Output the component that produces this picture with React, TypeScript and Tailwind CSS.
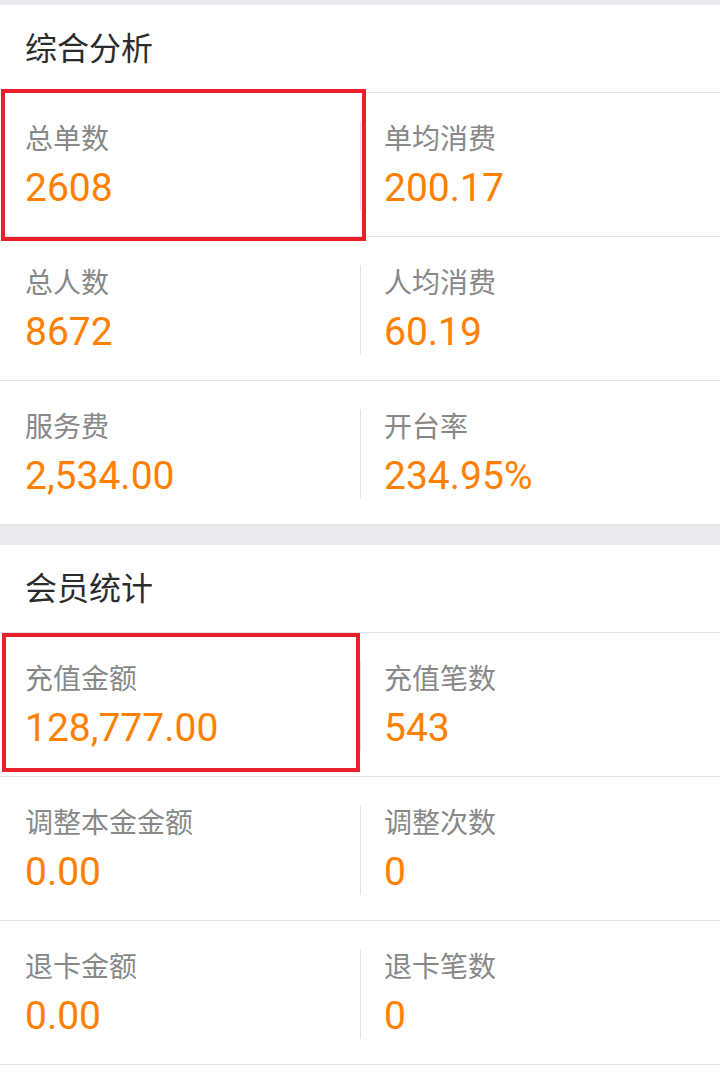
import React from "react";

type Item = { label: string; value: string };

const sections: { title: string; rows: [Item, Item][] }[] = [
  {
    title: "综合分析",
    rows: [
      [
        { label: "总单数", value: "2608" },
        { label: "单均消费", value: "200.17" },
      ],
      [
        { label: "总人数", value: "8672" },
        { label: "人均消费", value: "60.19" },
      ],
      [
        { label: "服务费", value: "2,534.00" },
        { label: "开台率", value: "234.95%" },
      ],
    ],
  },
  {
    title: "会员统计",
    rows: [
      [
        { label: "充值金额", value: "128,777.00" },
        { label: "充值笔数", value: "543" },
      ],
      [
        { label: "调整本金金额", value: "0.00" },
        { label: "调整次数", value: "0" },
      ],
      [
        { label: "退卡金额", value: "0.00" },
        { label: "退卡笔数", value: "0" },
      ],
    ],
  },
];

const cjk = "font-['Roboto','Noto_Sans_CJK_SC',sans-serif]";

function Cell({ item }: { item: Item }) {
  return (
    <div className="flex flex-col">
      <div className={`${cjk} text-[28px] leading-[36px] text-[#888888]`}>{item.label}</div>
      <div className={`${cjk} mt-[6px] text-[39px] leading-[48px] text-[#ff7f00]`}>{item.value}</div>
    </div>
  );
}

function Section({ title, rows }: { title: string; rows: [Item, Item][] }) {
  return (
    <div className="bg-white">
      <div className="h-[88px] border-b border-[#e2e2e2] flex items-center pl-[25px]">
        <span className={`${cjk} text-[32px] text-[#2b2b2b]`}>{title}</span>
      </div>
      {rows.map((r, i) => (
        <div key={i} className="h-[144px] border-b border-[#e2e2e2] flex">
          <div className="w-1/2 pl-[25px] pt-[29px]">
            <Cell item={r[0]} />
          </div>
          <div className="w-1/2 pt-[28px]">
            <div className="h-[90px] border-l border-[#e2e2e2] pl-[23px] pt-[1px]">
              <Cell item={r[1]} />
            </div>
          </div>
        </div>
      ))}
    </div>
  );
}

export default function App() {
  return (
    <div className="relative w-[720px] h-[1072px] bg-white overflow-hidden">
      <div className="h-[5px] bg-[#e9e9ee]" />
      <Section {...sections[0]} />
      <div className="h-[20px] bg-[#e9e9ee]" />
      <Section {...sections[1]} />
      <div className="absolute left-[1px] top-[89px] w-[365px] h-[152px] border-[4px] border-[#e8202a]" />
      <div className="absolute left-[2px] top-[633px] w-[358px] h-[139px] border-[4px] border-[#e8202a]" />
    </div>
  );
}
